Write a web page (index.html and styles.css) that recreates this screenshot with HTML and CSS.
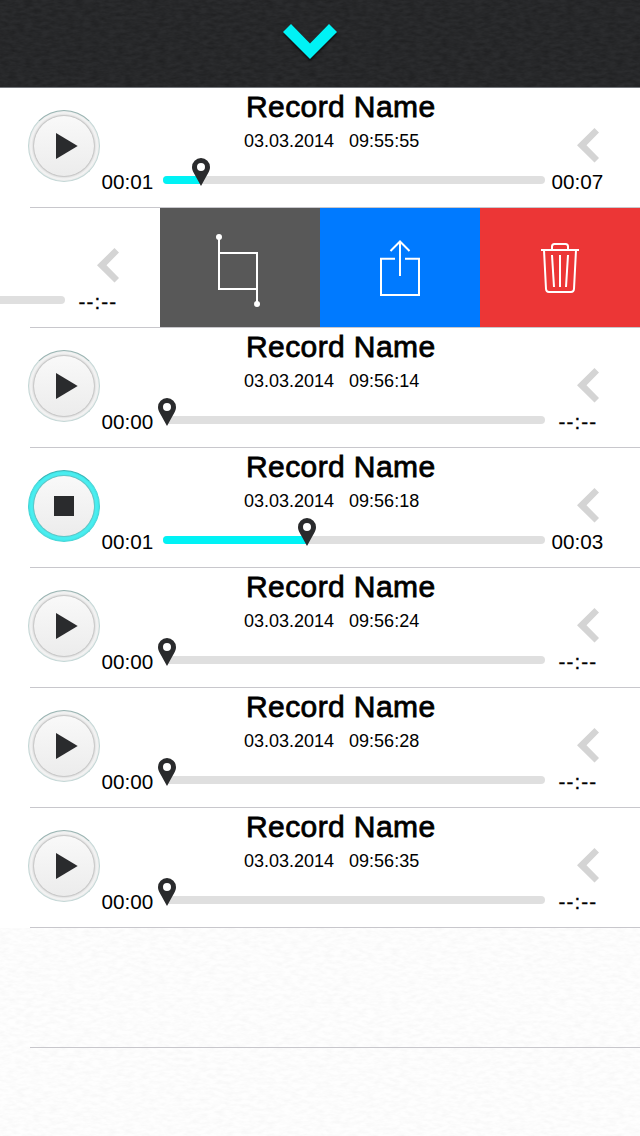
FILE: index.html
```html
<!DOCTYPE html>
<html>
<head>
	<meta charset="UTF-8">
	<title></title>
	<link rel="stylesheet" href="styles.css">
</head>
<body>
<!-- shared icons -->
<svg class="defs">
	<symbol id="play" viewBox="6 6 60 60"><path d="M28 23L49.7 36L28 49Z"/></symbol>
	<symbol id="stop" viewBox="6 6 60 60"><path d="M26 26h20v20h-20z"/></symbol>
	<symbol id="back" viewBox="0 0 22 35"><path d="M0 17.3L17.5 0L22 4.5L9.5 17.3L22 30L17.5 34.5Z"/></symbol>
	<symbol id="pin" viewBox="0 0 18 28"><path fill-rule="evenodd" d="M9 0a9 9 0 0 1 9 9c0 2-.6 3.6-1.4 5.2L9 28L1.4 14.2C.6 12.6 0 11 0 9a9 9 0 0 1 9-9zM9 5a4 4 0 1 0 0 8a4 4 0 1 0 0-8z"/></symbol>
</svg>

<div class="header">
	<svg class="down" viewBox="0 0 54 35"><path d="M0 8L8 0L27 19.5L46 0L54 8L27 35Z"/></svg>
</div>

<ul id="list"></ul>

<div class="empty"></div>

<script>
	var records = [
		{date:'03.03.2014', time:'09:55:55', now:'00:01', end:'00:07', pos:38},
		{end:'--:--', pos:4, open:true},
		{date:'03.03.2014', time:'09:56:14', now:'00:00', end:'--:--', pos:4},
		{date:'03.03.2014', time:'09:56:18', now:'00:01', end:'00:03', pos:144, playing:true},
		{date:'03.03.2014', time:'09:56:24', now:'00:00', end:'--:--', pos:4},
		{date:'03.03.2014', time:'09:56:28', now:'00:00', end:'--:--', pos:4},
		{date:'03.03.2014', time:'09:56:35', now:'00:00', end:'--:--', pos:4}
	];

	// buttons uncovered when a row is swiped left
	var actions = '<div class="actions">' +
		'<div class="action crop"><svg viewBox="0 0 160 119"><path d="M59 29V81H97M59 45H97V96"/><circle cx="59" cy="29" r="3"/><circle cx="97" cy="96" r="3"/></svg></div>' +
		'<div class="action share"><svg viewBox="0 0 160 119"><path d="M75 50.7H61V87H99V50.7H85M80 33V68M70.5 43L80 33.5L89.5 43"/></svg></div>' +
		'<div class="action trash"><svg viewBox="0 0 160 119"><path d="M61 42H99M72 42V38.5Q72 36 74.5 36H85.5Q88 36 88 38.5V42M64 42L66 81Q66.3 84 69 84H91Q93.7 84 94 81L96 42M72 47L74 79M80 47V79M88 47L86 79"/></svg></div>' +
		'</div>';

	var html = '';
	for(var i=0;i<records.length;i++){
		var r = records[i];
		html += '<li class="row' + (r.open ? ' open' : '') + '"><div class="slide"><div class="record">';
		if(!r.open){
			html += '<div class="btn' + (r.playing ? ' on' : '') + '"><svg><use href="#' + (r.playing ? 'stop' : 'play') + '"/></svg></div>' +
				'<div class="name">Record Name</div>' +
				'<div class="date">' + r.date + '   ' + r.time + '</div>' +
				'<div class="now">' + r.now + '</div>';
		}
		html += '<svg class="back"><use href="#back"/></svg>' +
			'<div class="track"><div class="fill' + (r.pos > 4 ? '' : ' none') + '" style="width:' + r.pos + 'px"><svg class="pin"><use href="#pin"/></svg></div></div>' +
			'<div class="end' + (r.end == '--:--' ? ' unknown' : '') + '">' + r.end + '</div>' +
			'</div>' + (r.open ? actions : '') +
			'</div></li>';
	}
	document.getElementById('list').innerHTML = html;
</script>
</body>
</html>
```
FILE: styles.css
```css
body{
    margin: 0;
    width: 640px;
    height: 1136px;
    overflow: hidden;
    display: flex;
    flex-direction: column;
    background-color: #fff;
    color: #000;
    font-family: "Liberation Sans", Arial, sans-serif;
}
.defs{
    display: none;
}
.header{
    box-sizing: border-box;
    height: 88px;
    flex: none;
    padding: 24px 20px 0 0;
    text-align: center;
    border-bottom: 1px solid #74777c;
    background-color: #2b2c2e;
    background-image: url("data:image/svg+xml,%3Csvg xmlns='http://www.w3.org/2000/svg' width='640' height='88'%3E%3Cfilter id='n' x='0' y='0' width='100%25' height='100%25'%3E%3CfeTurbulence type='fractalNoise' baseFrequency='.12 .3' numOctaves='3' seed='4'/%3E%3CfeColorMatrix values='0 0 0 0 0 0 0 0 0 0 0 0 0 0 0 .4 0 0 0 -.1'/%3E%3C/filter%3E%3Crect width='640' height='88' filter='url(%23n)'/%3E%3C/svg%3E");
}
.down{
    width: 54px;
    height: 35px;
    fill: #00f2f5;
    overflow: visible;
    filter: drop-shadow(0 2px 1px rgba(0,0,0,.7));
}
#list{
    margin: 0;
    padding: 0;
    list-style: none;
    flex: none;
}
.row{
    height: 119px;
    padding-bottom: 1px;
    overflow: hidden;
    background: linear-gradient(#c8c7cc, #c8c7cc) 30px 119px / 610px 1px no-repeat;
}
.slide{
    display: flex;
    height: 119px;
}
.open .slide{
    margin-left: -480px;
}
.record{
    box-sizing: border-box;
    width: 640px;
    flex: none;
    padding-left: 28px;
    display: grid;
    grid-template-columns: 72px 63px 382px 1fr;
    grid-template-rows: 39px 42px 38px;
}
/* outer ring, the face is drawn by the svg inside */
.btn{
    box-sizing: border-box;
    grid-area: 1 / 1 / 4 / 2;
    width: 72px;
    height: 72px;
    margin-top: 22px;
    padding: 5px;
    border: 1px solid #c3d6d5;
    border-top-color: #98b3b1;
    border-radius: 50%;
    background: radial-gradient(circle, #bdbdbd 30px, #e6e6e6 31.5px, #f4f4f4 33px, #e4e6e6 36px);
}
.btn svg{
    display: block;
    width: 60px;
    height: 60px;
    fill: #2a2b2d;
    border-radius: 50%;
    background: linear-gradient(#f9f9f9, #ececec);
}
.btn.on{
    border-color: #45d5d6;
    border-top-color: #38b5b6;
    background: radial-gradient(circle, #5fb9ba 30px, #4bebed 31.5px, #48eff1 33px, #3fe0e2 36px);
}
.name{
    grid-area: 1 / 3;
    padding-left: 83px;
    font-size: 30px;
    line-height: 38px;
    letter-spacing: .4px;
    white-space: nowrap;
    -webkit-text-stroke: .8px #000;
}
.date{
    grid-area: 2 / 3;
    padding-left: 81px;
    font-size: 18px;
    line-height: 28px;
    white-space: pre;
}
.back{
    grid-area: 1 / 4 / 3 / 5;
    width: 22px;
    height: 35px;
    margin: 40px 0 0 32px;
    fill: #d4d4d4;
}
.now, .end{
    font-size: 20.7px;
    line-height: 26px;
}
.now{
    grid-area: 3 / 2;
    padding-left: 1.5px;
}
.end{
    grid-area: 3 / 4;
    padding-left: 6.5px;
}
.end.unknown{
    padding-left: 13.5px;
    letter-spacing: 1.1px;
    -webkit-text-stroke: .3px #000;
}
.track{
    grid-area: 3 / 3;
    height: 8px;
    margin-top: 7px;
    border-radius: 4px;
    background-color: #dfdfdf;
}
.fill{
    position: relative;
    height: 8px;
    border-radius: 4px 0 0 4px;
    background-color: #00f2f5;
}
.fill.none{
    border-radius: 0;
    background-color: #fff;
}
/* marker stands over the end of the fill */
.pin{
    position: absolute;
    right: -9px;
    bottom: -2px;
    width: 18px;
    height: 28px;
    fill: #2a2b2d;
}
.actions{
    display: flex;
    flex: none;
}
.action{
    width: 160px;
    height: 119px;
}
.action svg{
    display: block;
    width: 160px;
    height: 119px;
    fill: none;
    stroke: #fff;
    stroke-width: 2;
}
.action circle{
    fill: #fff;
    stroke: none;
}
.crop{
    background-color: #585858;
}
.share{
    background-color: #007aff;
}
.trash{
    background-color: #ec3636;
}
.empty{
    flex: 1;
    background-color: #fefefe;
    background-image: linear-gradient(#c8c7cc, #c8c7cc), url("data:image/svg+xml,%3Csvg xmlns='http://www.w3.org/2000/svg' width='640' height='208'%3E%3Cfilter id='n' x='0' y='0' width='100%25' height='100%25'%3E%3CfeTurbulence type='fractalNoise' baseFrequency='.12 .3' numOctaves='3' seed='7'/%3E%3CfeColorMatrix values='0 0 0 0 0 0 0 0 0 0 0 0 0 0 0 .05 0 0 0 -.017'/%3E%3C/filter%3E%3Crect width='640' height='208' filter='url(%23n)'/%3E%3C/svg%3E");
    background-position: 30px 119px, 0 0;
    background-size: 610px 1px, 640px 208px;
    background-repeat: no-repeat;
}
```
